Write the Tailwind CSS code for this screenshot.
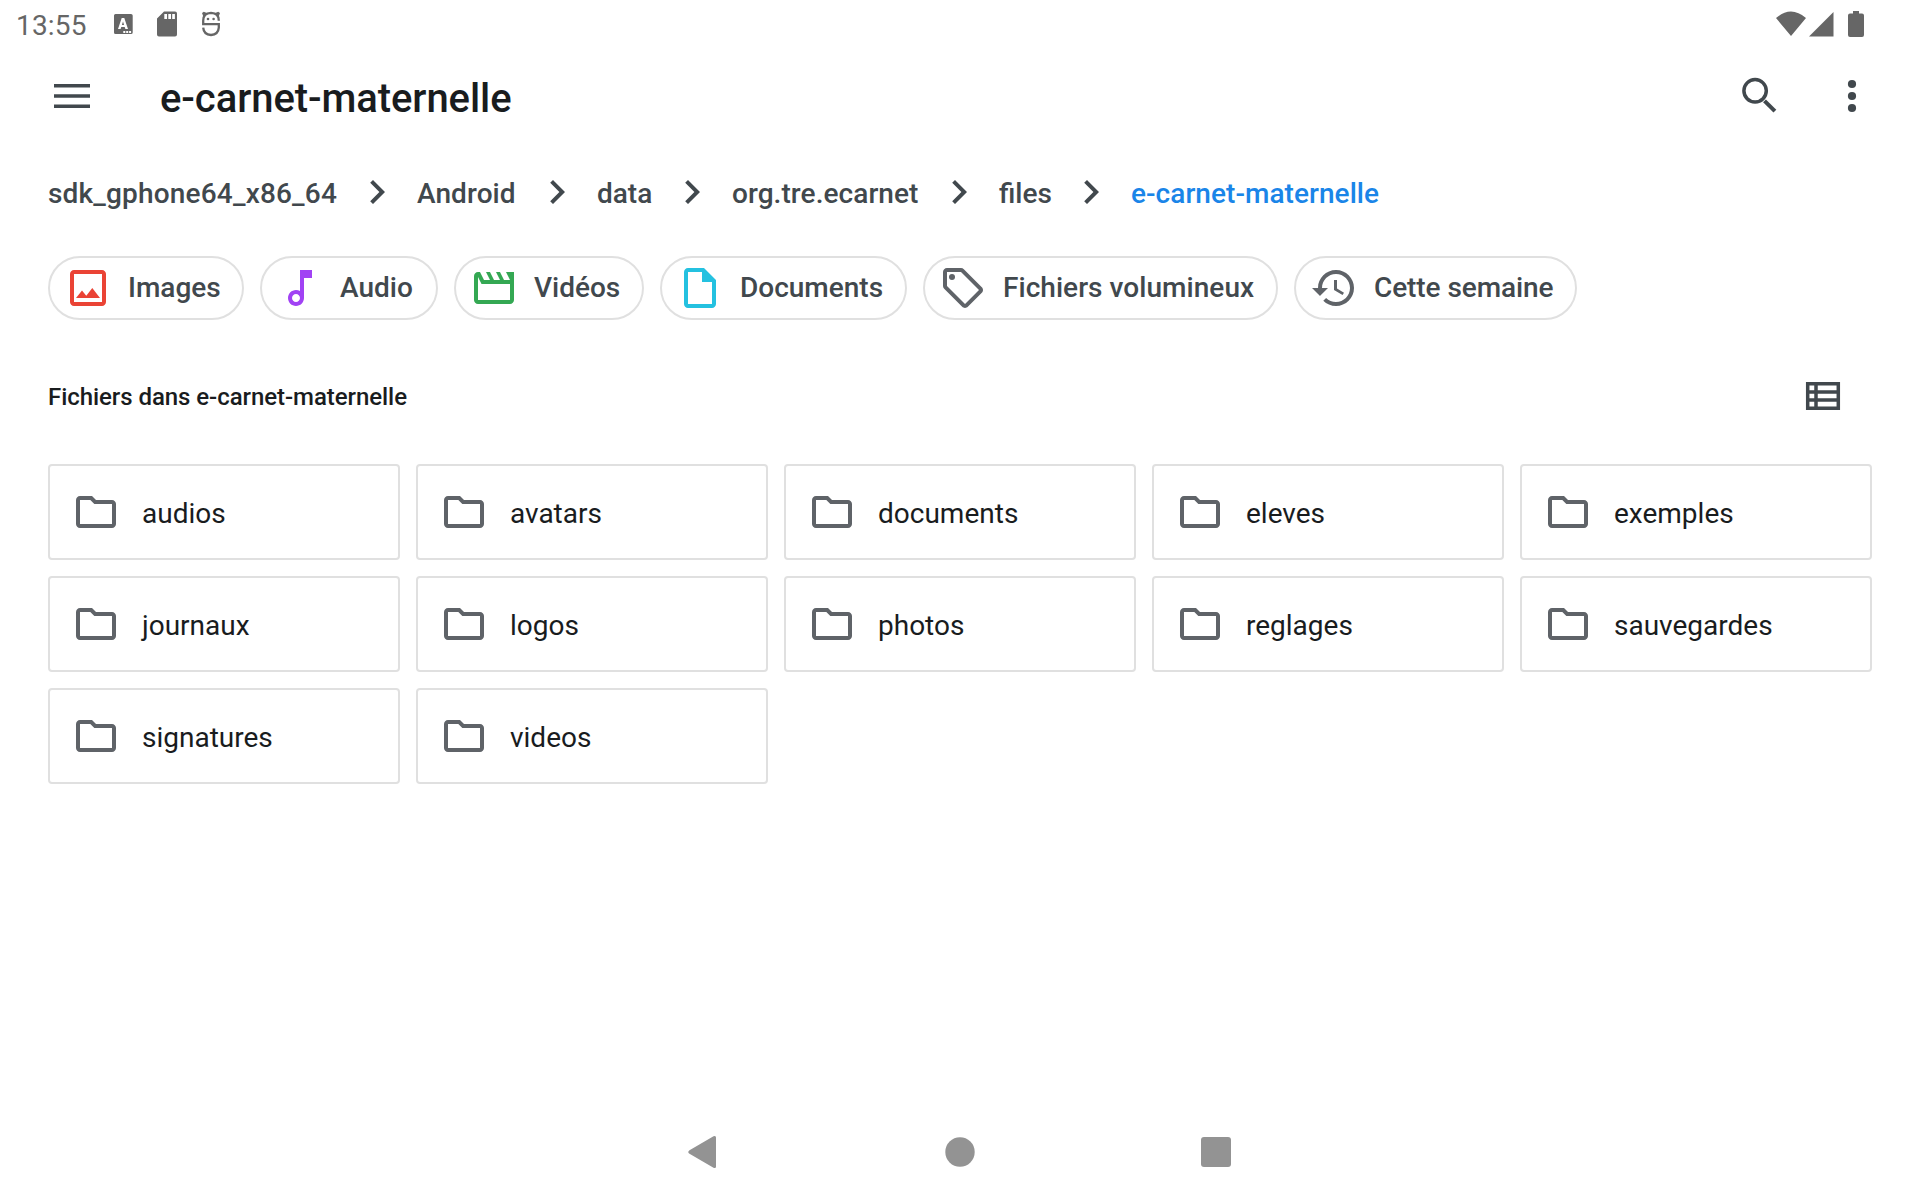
<!DOCTYPE html>
<html lang="fr">
<head>
<meta charset="utf-8">
<title>e-carnet-maternelle</title>
<script src="https://cdn.jsdelivr.net/npm/@tailwindcss/browser@4"></script>
</head>
<body class="bg-white">
<svg class="hidden">
  <symbol id="chev" viewBox="0 0 24 24"><path d="M8.6 16.6 13.2 12 8.6 7.4 10 6l6 6-6 6z"/></symbol>
  <symbol id="folder" viewBox="0 0 24 24"><path d="M9.17 6l2 2H20v10H4V6h5.17M10 4H4c-1.1 0-1.99.9-1.99 2L2 18c0 1.1.9 2 2 2h16c1.1 0 2-.9 2-2V8c0-1.100-.9-2-2-2h-8l-2-2z"/></symbol>
</svg>
<div class="flex h-[1200px] w-[1920px] flex-col overflow-hidden bg-white font-['Roboto',sans-serif] text-[#191c1e]">
  <!-- Status bar -->
  <header class="flex h-12 shrink-0 items-center pl-4 text-[#666]">
    <span class="w-[92px] pt-[3px] text-[28px] font-normal leading-[50px] tracking-[0.2px]">13:55</span>
    <svg class="h-12 w-[120px]" viewBox="108 0 120 48" fill="currentColor">
      <path fill-rule="evenodd" d="M115.500 14h15.500q1.700 0 1.700 1.500v17q0 1.500-1.700 1.500h-15.500q-1.500 0-1.500-1.500v-17q0-1.500 1.500-1.500zM121.700 18l-3.700 11h2.600l.7-2h3.400l.7 2h2.600l-3.700-11zM123 21.500l1.100 3.500h-2.200zM123.300 31v2h2v-2zM126.200 31v2h2v-2zM129.100 31v2h2v-2z"/>
      <path fill-rule="evenodd" d="M164 11.500h11q2 0 2 2v21q0 2-2 2h-16q-2 0-2-2v-16zM164.300 14v5h2.700v-5zM168.300 14v5h2.700v-5zM172.200 14v5h2.700v-5z"/>
      <g fill="none" stroke="currentColor" stroke-width="2.300"><path d="M218.800 20.800q.2-7.600-7.800-7.900-7.900.3-7.800 7.900v3.400h15.600v3.500q-.5 7-7.800 7.300-7.300-.3-7.800-7.300"/></g>
      <path d="M202 13l1.800-1.200 3.700 1.500-4 3.600zM220 13l-1.800-1.200-3.700 1.500 4 3.600z"/>
      <circle cx="208" cy="19" r="1.300"/><circle cx="213.600" cy="19" r="1.300"/>
    </svg>
    <svg class="ml-auto mr-[48px] h-12 w-[96px]" viewBox="1776 0 96 48" fill="currentColor">
      <path d="M1776 18q15-13 30 0l-15 18zM1833.500 12v24.500h-24.500zM1853 11h6v2.500h3q2 0 2 2v19.500q0 2-2 2h-12q-2 0-2-2v-19.500q0-2 2-2h3z"/>
    </svg>
  </header>
  <!-- App bar -->
  <div class="flex h-24 shrink-0 items-center pl-[48px] pr-[44px]">
    <svg class="size-12" viewBox="0 0 24 24" fill="#41484d"><path d="M3 18h18v-1.800H3zM3 12.900h18v-1.800H3zM3 6v1.800h18V6z"/></svg>
    <h1 class="ml-16 pt-[5px] text-[40px] font-medium leading-[48px] tracking-[-0.08px]">e-carnet-maternelle</h1>
    <svg class="ml-auto size-12" viewBox="0 0 48 48" fill="none" stroke="#41484d"><circle cx="19.100" cy="18.800" r="11.200" stroke-width="3.500"/><path d="M28.500 28.800 38.900 39.200" stroke-width="4"/></svg>
    <svg class="ml-[44px] size-12" viewBox="0 0 48 48" fill="#41484d"><circle cx="24" cy="12" r="4.100"/><circle cx="24" cy="24" r="4.100"/><circle cx="24" cy="36" r="4.100"/></svg>
  </div>
  <!-- Breadcrumb -->
  <nav class="flex h-24 shrink-0 items-center pl-12 text-[28px] font-medium leading-8 text-[#41484d]">
    <span class="w-[289px] pt-[3px] tracking-[0.18px]">sdk_gphone64_x86_64</span><svg class="mx-4 size-12" fill="currentColor"><use href="#chev"/></svg>
    <span class="w-[100px] pt-[3px] tracking-[0.1px]">Android</span><svg class="mx-4 size-12" fill="currentColor"><use href="#chev"/></svg>
    <span class="w-[55px] pt-[3px]">data</span><svg class="mx-4 size-12" fill="currentColor"><use href="#chev"/></svg>
    <span class="w-[187px] pt-[3px] tracking-[0.07px]">org.tre.ecarnet</span><svg class="mx-4 size-12" fill="currentColor"><use href="#chev"/></svg>
    <span class="w-[52px] pt-[3px]">files</span><svg class="mx-4 size-12" fill="currentColor"><use href="#chev"/></svg>
    <span class="pt-[3px] tracking-[0.05px] text-[#1a85e8]">e-carnet-maternelle</span>
  </nav>
  <!-- Filter chips -->
  <div class="mt-4 flex h-16 shrink-0 gap-4 pl-12 text-[28px] font-medium leading-8 text-[#41484d]">
    <div class="flex w-[196px] items-center gap-4 rounded-full border-2 border-[#e0e0e0] pl-[14px]">
      <svg class="size-12" viewBox="0 0 24 24" fill="#ea4335"><path d="M19 5v14H5V5h14m0-2H5c-1.100 0-2 .9-2 2v14c0 1.100.9 2 2 2h14c1.100 0 2-.9 2-2V5c0-1.100-.9-2-2-2zM14.140 12l-3 3.860L9 13.280 6 17h12z"/></svg><span>Images</span>
    </div>
    <div class="flex w-[178px] items-center gap-4 rounded-full border-2 border-[#e0e0e0] pl-[14px]">
      <svg class="size-12" viewBox="0 0 24 24" fill="#a142f4"><path d="M12 3v10.550c-.59-.34-1.270-.55-2-.55-2.210 0-4 1.790-4 4s1.790 4 4 4 4-1.790 4-4V7h4V3h-6zm-2 16c-1.100 0-2-.9-2-2s.9-2 2-2 2 .9 2 2-.9 2-2 2z"/></svg><span>Audio</span>
    </div>
    <div class="flex w-[190px] items-center gap-4 rounded-full border-2 border-[#e0e0e0] pl-[14px]">
      <svg class="size-12" viewBox="0 0 24 24" fill="#34a853"><path d="M18 4l2 4h-3l-2-4h-2l2 4h-3l-2-4H8l2 4H7L5 4H4c-1.100 0-1.990.9-1.990 2L2 18c0 1.100.9 2 2 2h16c1.100 0 2-.9 2-2V4h-4zM4 18V6.470L5.760 10H20v8H4z"/></svg><span>Vidéos</span>
    </div>
    <div class="flex w-[247px] items-center gap-4 rounded-full border-2 border-[#e0e0e0] pl-[14px]">
      <svg class="size-12" viewBox="0 0 24 24" fill="#24c1e0"><path d="M14 2H6c-1.100 0-1.990.9-1.990 2L4 20c0 1.100.89 2 1.990 2H18c1.100 0 2-.9 2-2V8l-6-6zM6 20V4h7v5h5v11H6z"/></svg><span>Documents</span>
    </div>
    <div class="flex w-[355px] items-center gap-4 rounded-full border-2 border-[#e0e0e0] pl-[14px]">
      <svg class="size-12" viewBox="0 0 24 24" fill="#5f6368"><path d="M21.410 11.580l-9-9C12.050 2.220 11.550 2 11 2H4c-1.100 0-2 .9-2 2v7c0 .55.22 1.050.59 1.420l9 9c.36.36.86.58 1.410.58s1.050-.22 1.410-.59l7-7c.37-.36.59-.86.59-1.410s-.23-1.060-.59-1.420zM13 20.010L4 11V4h7v-.01l9 9-7 7.020z"/><circle cx="6.500" cy="6.500" r="1.500"/></svg><span class="tracking-[0.05px]">Fichiers volumineux</span>
    </div>
    <div class="flex w-[283px] items-center gap-4 rounded-full border-2 border-[#e0e0e0] pl-[14px]">
      <svg class="size-12" viewBox="0 0 24 24" fill="#5f6368"><path d="M13 3c-4.970 0-9 4.030-9 9H1l3.890 3.890.07.14L9 12H6c0-3.870 3.130-7 7-7s7 3.130 7 7-3.130 7-7 7c-1.930 0-3.680-.79-4.940-2.060l-1.420 1.420C8.270 19.990 10.510 21 13 21c4.970 0 9-4.030 9-9s-4.030-9-9-9zm-1 5v5l4.280 2.540.72-1.210-3.500-2.080V8H12z"/></svg><span class="whitespace-nowrap tracking-[-0.08px]">Cette semaine</span>
    </div>
  </div>
  <!-- Section header -->
  <div class="mt-7 flex h-24 shrink-0 items-center pl-12 pr-[73px]">
    <h2 class="pt-[2px] text-[24px] font-medium leading-8 tracking-[-0.06px]">Fichiers dans e-carnet-maternelle</h2>
    <svg class="ml-auto size-12" viewBox="0 0 48 48" fill="none" stroke="#41484d" stroke-width="3.500"><path d="M8.700 11.700h30.600v24.600h-30.600zM8.500 20h31M8.500 28h31M17 11.500v25"/></svg>
  </div>
  <!-- Folder grid -->
  <main class="mt-5 grid grid-cols-5 gap-4 px-12 text-[28px] leading-8" id="grid"></main>
  <!-- Navigation bar -->
  <footer class="mt-auto flex h-24 shrink-0 items-center justify-center gap-[208px] text-[#939393]">
    <svg class="size-12" viewBox="0 0 48 48" fill="currentColor"><path d="M9.500 22.200 33.500 8.200q2.500-1 2.500 1.200v29.200q0 2.200-2.500 1.200l-24-14q-2.500-1.800 0-3.600z"/></svg>
    <svg class="size-12" viewBox="0 0 48 48" fill="currentColor"><circle cx="24" cy="24" r="14.700"/></svg>
    <svg class="size-12" viewBox="0 0 48 48" fill="currentColor"><rect x="9" y="9" width="30" height="30" rx="3"/></svg>
  </footer>
</div>
<script>
const names = ["audios","avatars","documents","eleves","exemples","journaux","logos","photos","reglages","sauvegardes","signatures","videos"];
document.getElementById("grid").innerHTML = names.map(n =>
  `<div class="flex h-24 items-center rounded-[4px] border-2 border-[#e0e0e0] pl-[22px]"><svg class="size-12" fill="#5f6368"><use href="#folder"/></svg><span class="ml-[22px] pt-1">${n}</span></div>`).join("");
</script>
</body>
</html>
